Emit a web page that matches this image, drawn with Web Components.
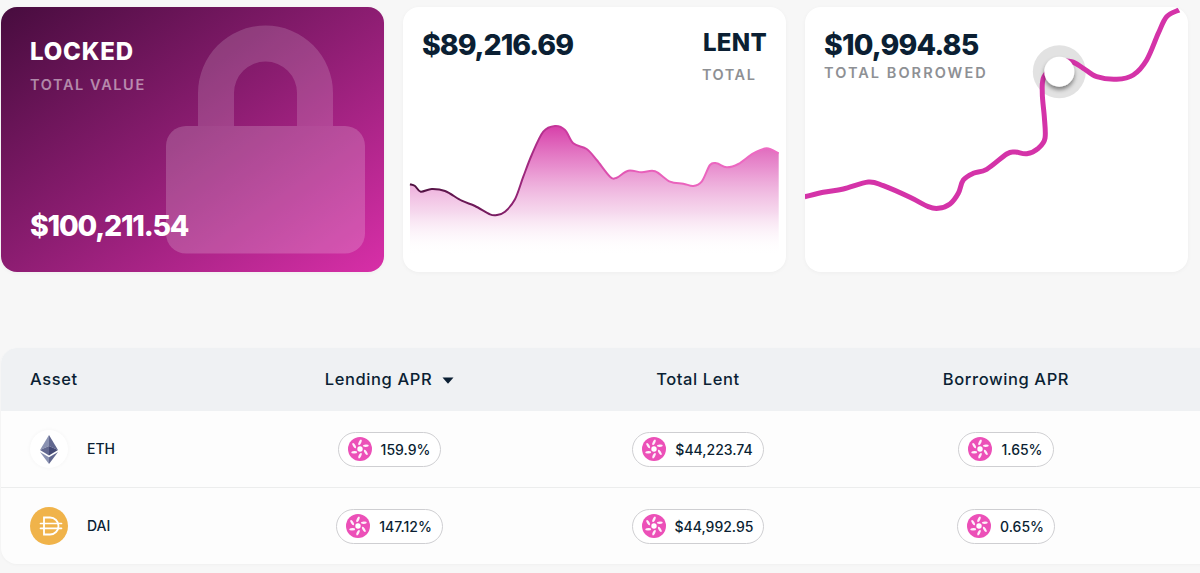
<!doctype html>
<html>
<head>
<meta charset="utf-8">
<title>Markets</title>
<style>
  html, body { margin: 0; height: 100%; overflow: hidden; }
  body { background: #f7f7f7; font-family: Inter, "Open Sans", "Liberation Sans", sans-serif; color: #0b1f33; }
  .page { display: flex; flex-direction: column; padding: 7px 0 0 1px; gap: 76px; width: 1240px; }
  .cards { display: grid; grid-template-columns: repeat(3, 383px); gap: 19px; height: 265px; }
</style>
</head>
<body>
<div class="page">
  <div class="cards">
    <stat-card variant="locked">
      <lock-art slot="art"></lock-art>
      <span slot="title">LOCKED</span>
      <span slot="sub">TOTAL VALUE</span>
      <span slot="amount">$100,211.54</span>
    </stat-card>
    <stat-card variant="lent">
      <spark-chart slot="art" area box="403 7 383 265"
        points="410,184.3 415,186 420.7,191.7 431.7,189 445,191 461.7,200.7 475,206 490,214.3 496.7,215 505,211.7 515,199.3 523.3,176.7 531.7,155 543.3,131.7 555,126 565,130 573.3,143.3 586.7,149 596.7,160 610,176.7 616.7,177.7 628.3,170.7 641.7,172.3 655,171.3 670,181.7 683.3,183.7 693.3,186 701.7,181.7 710,165 716.7,163.3 726.7,167.3 738.3,164 753.3,153.3 766.7,148.3 778.7,153.3"></spark-chart>
      <span slot="amount">$89,216.69</span>
      <span slot="title">LENT</span>
      <span slot="sub">TOTAL</span>
    </stat-card>
    <stat-card variant="borrowed">
      <spark-chart slot="art" box="805 7 382 265" dot="1059.3,71.7"
        points="804.7,196.7 823.3,192.3 843.3,189 868.3,182 883.3,185.7 910,197.3 928.3,206.7 938.3,208.3 950,204 958.3,193.3 963.3,180 973.3,173.3 986.7,169.3 1006.7,154 1015,152 1026.7,153.7 1038.3,148.3 1045,138.3 1044.3,116.7 1042.3,93.3 1044,76.7 1058,63 1071.7,61.7 1083.3,68.3 1096.7,76.7 1116.7,79.3 1133.3,75 1146.7,60 1158.3,33.3 1166.7,16.7 1179,10"></spark-chart>
      <span slot="amount">$10,994.85</span>
      <span slot="sub">TOTAL BORROWED</span>
    </stat-card>
  </div>

  <asset-table>
    <asset-row header>
      <span>Asset</span>
      <span>Lending APR <sort-caret></sort-caret></span>
      <span>Total Lent</span>
      <span>Borrowing APR</span>
    </asset-row>
    <asset-row>
      <coin-label coin="eth">ETH</coin-label>
      <apr-chip>159.9%</apr-chip>
      <apr-chip>$44,223.74</apr-chip>
      <apr-chip>1.65%</apr-chip>
    </asset-row>
    <asset-row>
      <coin-label coin="dai">DAI</coin-label>
      <apr-chip>147.12%</apr-chip>
      <apr-chip>$44,992.95</apr-chip>
      <apr-chip>0.65%</apr-chip>
    </asset-row>
  </asset-table>
</div>

<script>
class StatCard extends HTMLElement {
  constructor() {
    super();
    this.attachShadow({ mode: "open" });
    this.shadowRoot.innerHTML = `
    <style>
      :host { display: block; position: relative; border-radius: 16px; overflow: hidden; background: #fff; box-shadow: 0 1px 4px rgba(0,0,0,.04); color: #0b1f33; }
      .art { position: absolute; inset: 0; display: block; }
      .body { position: relative; box-sizing: border-box; height: 100%; display: grid; grid-template-columns: 1fr auto; align-content: start; }
      ::slotted([slot=amount]) { font-size: 28.5px; font-weight: 800; letter-spacing: -.85px; line-height: 34px; }
      ::slotted([slot=title]) { font-size: 24px; font-weight: 800; line-height: 30px; letter-spacing: .3px; }
      ::slotted([slot=sub]) { font-size: 14.5px; font-weight: 600; letter-spacing: 1.5px; line-height: 18px; color: #8e9094; }

      :host([variant=locked]) { background: linear-gradient(to bottom right, #470c3e 0%, #8d1d72 50%, #d82fa8 100%); color: #fff; }
      :host([variant=locked]) .body { display: flex; flex-direction: column; padding: 30px 29px 0; }
      :host([variant=locked]) ::slotted([slot=amount]) { margin-top: auto; margin-bottom: 29px; color: #fff; letter-spacing: -1.2px; }
      :host([variant=locked]) ::slotted([slot=title]) { color: #fff; letter-spacing: .8px; }
      :host([variant=locked]) ::slotted([slot=sub]) { color: rgba(255,255,255,.5); margin-top: 9px; letter-spacing: 1.6px; }

      :host([variant=lent]) .body { padding: 21px 19px 0 19px; grid-template-areas: "amount title" "amount sub"; }
      :host([variant=lent]) ::slotted([slot=amount]) { grid-area: amount; letter-spacing: -1.05px; }
      :host([variant=lent]) ::slotted([slot=title]) { grid-area: title; justify-self: start; }
      :host([variant=lent]) ::slotted([slot=sub]) { grid-area: sub; justify-self: start; margin-top: 8px; margin-left: -1px; }

      :host([variant=borrowed]) .body { padding: 21px 19px 0; grid-template-columns: 1fr; }
      :host([variant=borrowed]) ::slotted([slot=sub]) { margin-top: 2px; letter-spacing: 2.05px; }
    </style>
    <div class="art"><slot name="art"></slot></div>
    <div class="body">
      <slot name="amount"></slot>
      <slot name="title"></slot>
      <slot name="sub"></slot>
    </div>`;
    // el orden del locked es distinto: titulo, sub y abajo el importe
    if (this.getAttribute("variant") === "locked") {
      const body = this.shadowRoot.querySelector(".body");
      body.appendChild(body.querySelector("slot[name=amount]"));
    }
  }
}
customElements.define("stat-card", StatCard);

class LockArt extends HTMLElement {
  constructor() {
    super();
    this.attachShadow({ mode: "open" });
    this.shadowRoot.innerHTML = `
    <style>:host { display: block; width: 100%; height: 100%; } svg { display: block; }</style>
    <svg width="383" height="265" viewBox="1 7 383 265" xmlns="http://www.w3.org/2000/svg">
      <path fill="#fff" fill-opacity=".16" d="M198 126V93a67.500 67.500 0 0 1 135 0v33h-36V93a31.500 31.500 0 0 0-63 0v33z"/>
      <rect x="166" y="126" width="199" height="127.500" rx="20" fill="#fff" fill-opacity=".19"/>
    </svg>`;
  }
}
customElements.define("lock-art", LockArt);

class SparkChart extends HTMLElement {
  constructor() {
    super();
    this.attachShadow({ mode: "open" });
  }

  connectedCallback() {
    const pts = this.getAttribute("points").trim().split(/\s+/).map(p => p.split(",").map(Number));
    const box = this.getAttribute("box");
    const [bx, by, bw, bh] = box.split(" ").map(Number);

    // Catmull-Rom a bezier, para que la linea salga suave
    let d = `M${pts[0][0]} ${pts[0][1]}`;
    for (let i = 0; i < pts.length - 1; i++) {
      const p0 = pts[i - 1] || pts[i], p1 = pts[i], p2 = pts[i + 1], p3 = pts[i + 2] || p2;
      const c1x = p1[0] + (p2[0] - p0[0]) / 6, c1y = p1[1] + (p2[1] - p0[1]) / 6;
      const c2x = p2[0] - (p3[0] - p1[0]) / 6, c2y = p2[1] - (p3[1] - p1[1]) / 6;
      d += `C${c1x.toFixed(1)} ${c1y.toFixed(1)} ${c2x.toFixed(1)} ${c2y.toFixed(1)} ${p2[0]} ${p2[1]}`;
    }

    const last = pts[pts.length - 1];
    let inner = "";
    if (this.hasAttribute("area")) {
      inner = `
      <defs>
        <linearGradient id="fill" gradientUnits="userSpaceOnUse" x1="0" y1="126" x2="0" y2="256">
          <stop offset="0" stop-color="#d73fa9"/>
          <stop offset=".32" stop-color="#e47cc6" stop-opacity=".85"/>
          <stop offset=".66" stop-color="#f0bfe2" stop-opacity=".62"/>
          <stop offset="1" stop-color="#fff" stop-opacity="0"/>
        </linearGradient>
        <linearGradient id="line" gradientUnits="userSpaceOnUse" x1="410" y1="0" x2="779" y2="0">
          <stop offset="0" stop-color="#4d123f"/>
          <stop offset=".24" stop-color="#7b1c63"/>
          <stop offset=".4" stop-color="#c8369c"/>
          <stop offset=".62" stop-color="#e85fba"/>
          <stop offset="1" stop-color="#ee6cc4"/>
        </linearGradient>
      </defs>
      <path d="${d}L${last[0]} 258L${pts[0][0]} 258Z" fill="url(#fill)"/>
      <path d="${d}" fill="none" stroke="url(#line)" stroke-width="2"/>`;
    } else {
      const [dx, dy] = this.getAttribute("dot").split(",").map(Number);
      inner = `
      <defs>
        <filter id="sh" x="-50%" y="-50%" width="200%" height="200%">
          <feDropShadow dx="0" dy="3" stdDeviation="2" flood-color="#000" flood-opacity=".45"/>
        </filter>
      </defs>
      <circle cx="${dx}" cy="${dy}" r="26.500" fill="#e2e2e2"/>
      <path d="${d}" fill="none" stroke="#d433a8" stroke-width="5" stroke-linecap="butt"/>
      <circle cx="${dx}" cy="${dy}" r="15" fill="#fff" filter="url(#sh)"/>`;
    }

    this.shadowRoot.innerHTML = `
    <style>:host { display: block; width: 100%; height: 100%; } svg { display: block; }</style>
    <svg width="${bw}" height="${bh}" viewBox="${box}" xmlns="http://www.w3.org/2000/svg">${inner}</svg>`;
  }
}
customElements.define("spark-chart", SparkChart);

class AssetTable extends HTMLElement {
  constructor() {
    super();
    this.attachShadow({ mode: "open" });
    this.shadowRoot.innerHTML = `
    <style>
      :host { display: block; border-radius: 16px; overflow: hidden; background: #fdfdfd; box-shadow: 0 1px 3px rgba(0,0,0,.03); }
    </style>
    <slot></slot>`;
  }
}
customElements.define("asset-table", AssetTable);

class AssetRow extends HTMLElement {
  constructor() {
    super();
    this.attachShadow({ mode: "open" });
    this.shadowRoot.innerHTML = `
    <style>
      :host { display: grid; grid-template-columns: 234px 309px 308px 308px 1fr; align-items: center; height: 77px; box-sizing: border-box; border-bottom: 1px solid #eceded; font-size: 16.5px; }
      :host(:last-child) { border-bottom: 0; height: 76px; }
      :host([header]) { height: 63px; background: #eff1f3; border-bottom: 0; padding-bottom: 2px; letter-spacing: .6px; font-weight: 500; }
      ::slotted(*) { justify-self: center; }
      ::slotted(:first-child) { justify-self: start; margin-left: 29px; }
    </style>
    <slot></slot>`;
  }
}
customElements.define("asset-row", AssetRow);

class SortCaret extends HTMLElement {
  constructor() {
    super();
    this.attachShadow({ mode: "open" });
    this.shadowRoot.innerHTML = `
    <style>:host { display: inline-block; margin-left: 5px; vertical-align: 1px; } svg { display: block; }</style>
    <svg width="12" height="7" viewBox="0 0 12 7"><path d="M.5 .5h11L6.500 6.300a.7 .7 0 0 1-1 0z" fill="#0b1f33"/></svg>`;
  }
}
customElements.define("sort-caret", SortCaret);

class CoinLabel extends HTMLElement {
  constructor() {
    super();
    this.attachShadow({ mode: "open" });
    const eth = `
      <svg width="38" height="38" viewBox="0 0 38 38" style="border-radius:50%;background:#fff;box-shadow:0 0 4px rgba(0,0,0,.04)">
        <path d="M19 5v11l-9 4z" fill="#8a92b2"/>
        <path d="M19 5l9 15-9-4z" fill="#62688f"/>
        <path d="M10 20l9-4v9.500z" fill="#62688f"/>
        <path d="M28 20l-9-4v9.500z" fill="#454a75"/>
        <path d="M10 22l9 12v-6.800z" fill="#8a92b2"/>
        <path d="M28 22l-9 12v-6.800z" fill="#62688f"/>
      </svg>`;
    const dai = `
      <svg width="38" height="38" viewBox="0 0 38 38">
        <circle cx="19" cy="19" r="19" fill="#f0b34a"/>
        <path d="M14 10.500h6a8.500 8.500 0 0 1 0 17h-6z" fill="none" stroke="#fff" stroke-width="1.800"/>
        <path d="M10.500 16.500h21M10.500 21.300h21" fill="none" stroke="#fff" stroke-width="1.700" stroke-linecap="round"/>
      </svg>`;
    this.shadowRoot.innerHTML = `
    <style>
      :host { display: inline-flex; align-items: center; gap: 19px; font-size: 14px; font-weight: 500; }
      svg { display: block; }
      slot { display: block; margin-top: -1px; }
    </style>
    ${this.getAttribute("coin") === "dai" ? dai : eth}<slot></slot>`;
  }
}
customElements.define("coin-label", CoinLabel);

class AprChip extends HTMLElement {
  constructor() {
    super();
    this.attachShadow({ mode: "open" });
    // seis aspas alrededor del centro
    const blades = [0, 60, 120, 180, 240, 300].map(a =>
      `<ellipse cx="12" cy="5.300" rx="3" ry="1.250" fill="#fff" fill-opacity=".92" transform="rotate(${a} 12 12) rotate(-62 12 5.300)"/>`
    ).join("");
    this.shadowRoot.innerHTML = `
    <style>
      :host { display: inline-flex; align-items: center; gap: 9px; height: 35px; box-sizing: border-box; padding: 0 10px 0 9px; border: 1px solid #cfcfd2; border-radius: 18px; background: #fff; font-size: 14px; font-weight: 500; color: #0b1f33; }
      svg { display: block; flex: none; }
    </style>
    <svg width="24" height="24" viewBox="0 0 24 24">
      <circle cx="12" cy="12" r="12" fill="#ec50b8"/>${blades}
      <circle cx="12" cy="12" r="2.700" fill="#fff"/>
    </svg>
    <slot></slot>`;
  }
}
customElements.define("apr-chip", AprChip);
</script>
</body>
</html>
